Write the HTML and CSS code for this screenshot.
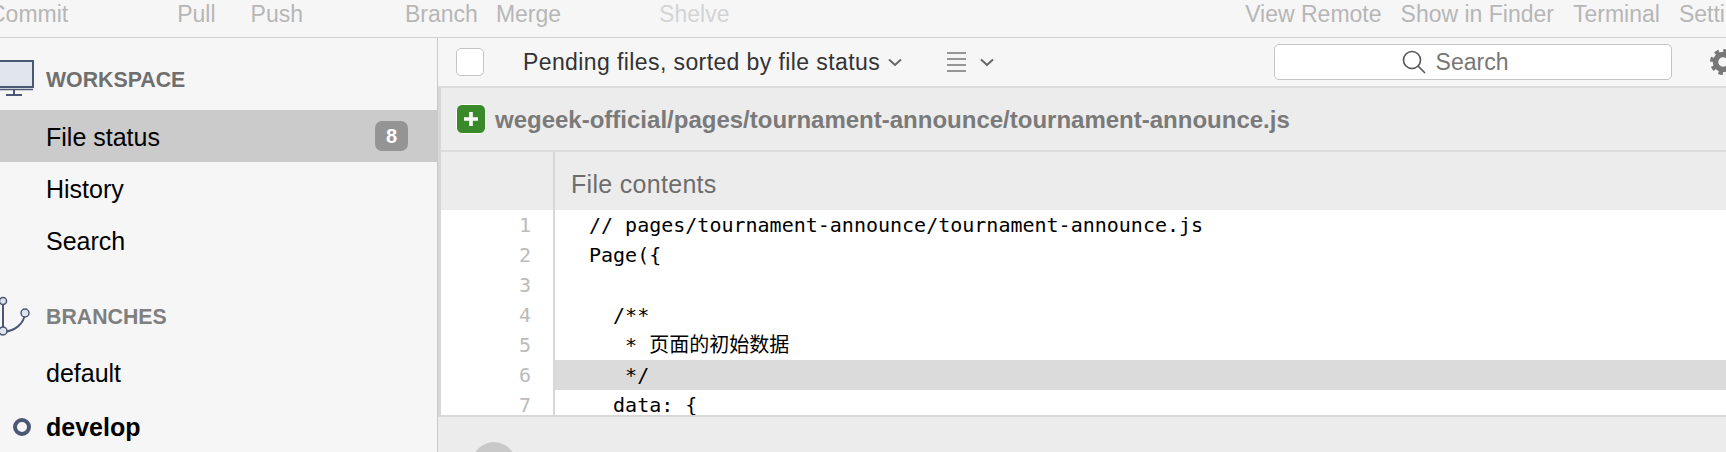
FILE: index.html
```html
<!DOCTYPE html>
<html lang="en">
<head>
<meta charset="utf-8">
<title>File status</title>
<link rel="stylesheet" href="styles.css">
</head>
<body>
<div class="app">
  <header class="toolbar">
    <div class="tb-left">
      <span class="tb commit">Commit</span>
      <span class="tb pull">Pull</span>
      <span class="tb push">Push</span>
      <span class="tb branch">Branch</span>
      <span class="tb merge">Merge</span>
      <span class="tb shelve">Shelve</span>
    </div>
    <div class="tb-right">
      <span class="tb">View Remote</span>
      <span class="tb">Show in Finder</span>
      <span class="tb">Terminal</span>
      <span class="tb">Settings</span>
    </div>
  </header>
  <div class="body">
    <aside class="sidebar">
      <div class="sec sec-work">
        <svg class="ico-monitor" width="34" height="36" viewBox="0 0 34 36"><rect x="-6" y="1" width="39" height="26" fill="#e1e5ee" stroke="#4b5875" stroke-width="2"/><path d="M-6 29.500H33" stroke="#4b5875" stroke-width="1.500"/><path d="M14 29v6M6 35h16" stroke="#4b5875" stroke-width="2" fill="none"/></svg>
        <span class="sec-title dark">WORKSPACE</span>
      </div>
      <div class="row selected"><span>File status</span><span class="badge">8</span></div>
      <div class="row"><span>History</span></div>
      <div class="row"><span>Search</span></div>
      <div class="sec sec-branch">
        <svg class="ico-branch" width="32" height="42" viewBox="0 0 32 42"><path d="M3 6V36M3 37C14 36 24 30 25 18" fill="none" stroke="#4b5875" stroke-width="2"/><circle cx="3" cy="6" r="3.500" fill="#dfe3ec" stroke="#4b5875" stroke-width="1.500"/><circle cx="25" cy="18" r="4" fill="#dfe3ec" stroke="#4b5875" stroke-width="1.500"/><circle cx="3" cy="36" r="4" fill="#dfe3ec" stroke="#4b5875" stroke-width="1.500"/></svg>
        <span class="sec-title">BRANCHES</span>
      </div>
      <div class="row tall"><span>default</span></div>
      <div class="row tall current"><i class="dot"></i><span>develop</span></div>
    </aside>
    <main class="panel">
      <div class="filterbar">
        <span class="check"></span>
        <span class="pending">Pending files, sorted by file status</span>
        <svg class="caret" width="14" height="9" viewBox="0 0 14 9"><path d="M1 1.500L7 7L13 1.500" fill="none" stroke="#666" stroke-width="2"/></svg>
        <svg class="list" width="19" height="22" viewBox="0 0 19 22"><path d="M0 2h19M0 8h19M0 14h19M0 20h19" stroke="#777" stroke-width="1.500"/></svg>
        <svg class="caret caret2" width="14" height="9" viewBox="0 0 14 9"><path d="M1 1.500L7 7L13 1.500" fill="none" stroke="#666" stroke-width="2"/></svg>
        <div class="searchbox">
          <svg width="24" height="24" viewBox="0 0 24 24"><circle cx="10" cy="10" r="8.500" fill="none" stroke="#555" stroke-width="1.600"/><path d="M16 16L23 23" stroke="#555" stroke-width="1.600"/></svg>
          <span>Search</span>
        </div>
        <svg class="gear" width="26" height="26" viewBox="0 0 26 26"><circle cx="13" cy="13" r="7.500" fill="none" stroke="#777" stroke-width="5.500"/><circle cx="13" cy="13" r="11" fill="none" stroke="#777" stroke-width="4" stroke-dasharray="4.320 4.320"/></svg>
      </div>
      <section class="frame">
        <div class="filehead">
          <span class="added"><svg width="18" height="18" viewBox="0 0 18 18"><path d="M9 2V16M2 9H16" stroke="#fff" stroke-width="3.600"/></svg></span>
          <span class="path">wegeek-official/pages/tournament-announce/tournament-announce.js</span>
        </div>
        <div class="conthead">
          <div class="gut"></div>
          <div class="conttitle">File contents</div>
        </div>
        <div class="code">
          <div class="line"><span class="num">1</span><span class="src">// pages/tournament-announce/tournament-announce.js</span></div>
          <div class="line"><span class="num">2</span><span class="src">Page({</span></div>
          <div class="line"><span class="num">3</span><span class="src"></span></div>
          <div class="line"><span class="num">4</span><span class="src">  /**</span></div>
          <div class="line"><span class="num">5</span><span class="src">   * 页面的初始数据</span></div>
          <div class="line hl"><span class="num">6</span><span class="src">   */</span></div>
          <div class="line"><span class="num">7</span><span class="src">  data: {</span></div>
        </div>
      </section>
      <div class="footer"><span class="avatar"></span></div>
    </main>
  </div>
</div>
</body>
</html>
```
FILE: styles.css
```css
* { box-sizing: border-box; }
html, body { margin: 0; padding: 0; width: 1726px; height: 452px; overflow: hidden; background: #f6f6f6; }
body { font-family: "Liberation Sans", Arial, sans-serif; }
.app { width: 1726px; height: 452px; overflow: hidden; display: flex; flex-direction: column; }

.toolbar { height: 38px; flex: none; display: flex; justify-content: space-between; align-items: flex-start; background: #f6f6f6; border-bottom: 1px solid #d2d2d2; overflow: hidden; }
.tb-left, .tb-right { display: flex; align-items: center; height: 28px; white-space: nowrap; }
.tb { font-size: 23px; color: #b6b6b6; line-height: 28px; }
.commit { margin-left: -11px; }
.pull { margin-left: 109px; }
.push { margin-left: 35px; }
.branch { margin-left: 102px; }
.merge { margin-left: 18px; }
.shelve { margin-left: 98px; color: #d4d4d4; }
.tb-right { gap: 19px; margin-right: -36px; }

.body { flex: 1; display: flex; min-height: 0; }
.sidebar { width: 438px; flex: none; background: #f6f6f6; border-right: 1px solid #c9c9c9; }
.sec { display: flex; align-items: flex-start; }
.sec-work { height: 72px; padding-top: 22px; }
.sec-branch { height: 80px; padding-top: 29px; }
.sec-title { font-size: 21.300px; font-weight: 700; color: #7f7f7f; line-height: 26px; }
.sec-title.dark { color: #6f6f6f; }
.sec-work .sec-title { margin-left: 12px; margin-top: 7px; }
.sec-branch .sec-title { margin-left: 14px; margin-top: 9px; }
.ico-monitor, .ico-branch { flex: none; }
.row { height: 52px; display: flex; align-items: center; justify-content: space-between; padding-left: 46px; padding-top: 2px; font-size: 25px; color: #000; }
.row.tall { height: 54px; padding-top: 0; }
.row.selected { background: #cbcbcb; }
.badge { width: 33px; height: 30px; margin-right: 29px; margin-top: -2px; background: #949494; color: #fff; border-radius: 7px; font-size: 20px; font-weight: 700; display: flex; align-items: center; justify-content: center; }
.current { justify-content: flex-start; padding-left: 13px; font-weight: 700; }
.dot { width: 18px; height: 18px; margin-right: 15px; border: 4px solid #4b5875; border-radius: 50%; flex: none; }

.panel { flex: 1; min-width: 0; display: flex; flex-direction: column; overflow: hidden; }
.filterbar { height: 48px; flex: none; display: flex; align-items: center; background: #f6f6f6; padding-left: 18px; }
.check { width: 28px; height: 28px; background: #fff; border: 1px solid #c4c4c4; border-radius: 5px; flex: none; }
.pending { margin-left: 39px; font-size: 23px; letter-spacing: 0.4px; color: #333; white-space: nowrap; }
.caret { margin-left: 8px; flex: none; }
.list { margin-left: 45px; flex: none; }
.caret2 { margin-left: 14px; }
.searchbox { margin-left: 280px; width: 398px; height: 36px; flex: none; background: #fff; border: 1px solid #c4c4c4; border-radius: 5px; display: flex; align-items: center; justify-content: center; gap: 10px; padding-right: 36px; font-size: 23px; color: #777; }
.gear { margin-left: 38px; flex: none; }

.frame { height: 331px; flex: none; display: flex; flex-direction: column; border-top: 2px solid #dcdcdc; border-left: 3px solid #d8d8d8; border-bottom: 2px solid #d8d8d8; background: #ececec; }
.filehead { height: 64px; flex: none; display: flex; align-items: center; padding-left: 15px; border-bottom: 2px solid #dcdcdc; }
.added { width: 30px; height: 30px; flex: none; background: #3a8a2c; border: 1px solid #fff; border-radius: 6px; display: flex; align-items: center; justify-content: center; }
.path { margin-left: 9px; padding-top: 1px; font-size: 24px; font-weight: 700; color: #7a7a7a; white-space: nowrap; }
.conthead { height: 58px; flex: none; display: flex; }
.gut { width: 114px; flex: none; border-right: 2px solid #d8d8d8; }
.conttitle { padding: 18px 0 0 16px; font-size: 25px; letter-spacing: 0.3px; color: #6d6d6d; }
.code { flex: 1; min-height: 0; overflow: hidden; background: #fff; font-family: "DejaVu Sans Mono", "Noto Sans CJK SC", monospace; font-size: 20px; line-height: 30px; color: #000; }
.line { display: flex; height: 30px; }
.num { width: 114px; flex: none; padding-right: 22px; text-align: right; color: #bbb; border-right: 2px solid #d8d8d8; }
.src { flex: 1; padding-left: 34px; white-space: pre; }
.hl .src { background: #dbdbdb; }
.footer { flex: 1; background: #ececec; padding: 25px 0 0 34px; overflow: hidden; }
.avatar { display: block; width: 44px; height: 44px; border-radius: 50%; background: #c9c9c9; }
```
